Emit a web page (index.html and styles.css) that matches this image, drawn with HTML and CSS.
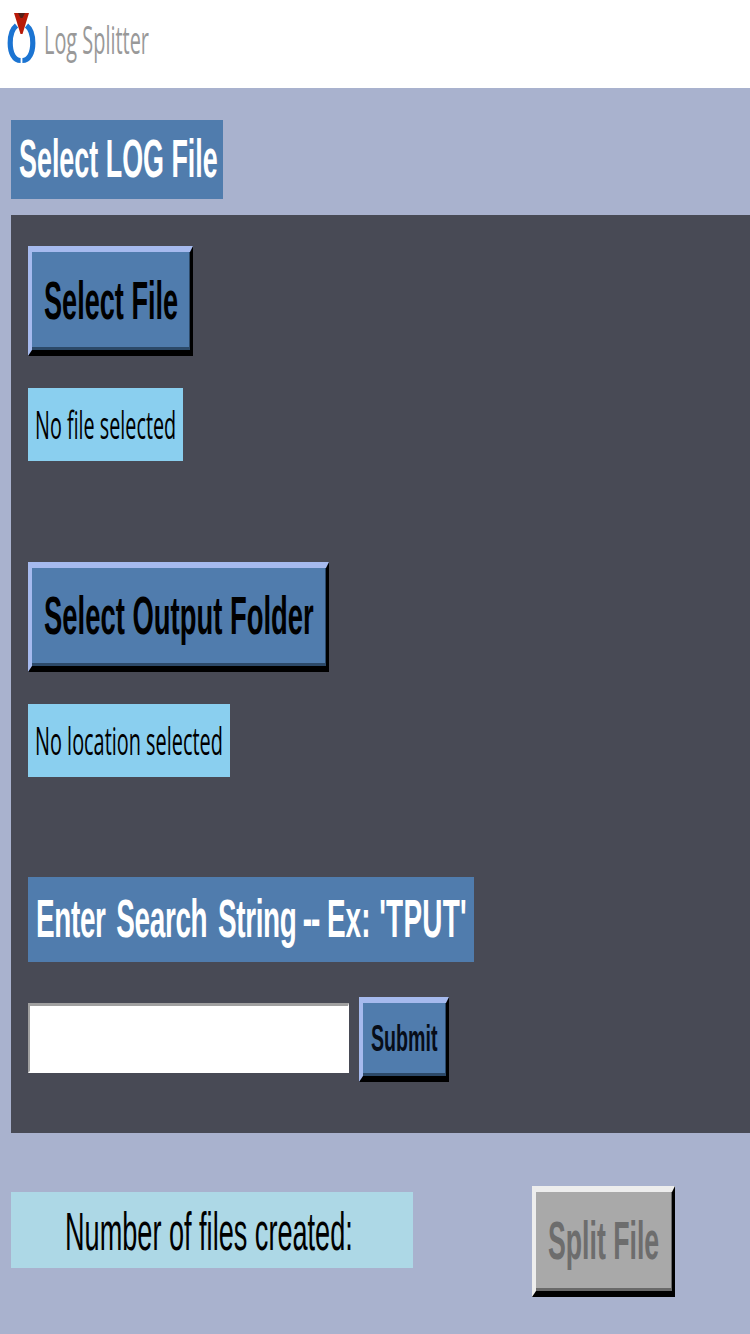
FILE: index.html
```html
<!DOCTYPE html>
<html lang="en">
<head>
<meta charset="utf-8">
<title>Log Splitter</title>
<link rel="stylesheet" href="styles.css">
</head>
<body>
<header class="titlebar">
  <svg class="logo" width="30" height="54" viewBox="0 0 30 54" aria-hidden="true">
    <path d="M9.500 13.500C5 17 3.200 23 3.200 31C3.200 41 7 48.500 13.600 48.500" fill="none" stroke="#1b74d2" stroke-width="5.200"/>
    <path d="M19.500 13.500C24 17 25.800 23 25.800 31C25.800 41 22 48.500 15.400 48.500" fill="none" stroke="#1b74d2" stroke-width="5.200"/>
    <path d="M7 1H22L15.500 22H13.500Z" fill="#b81a08"/>
    <path d="M11 1H18L15.500 6H13.500Z" fill="#542018"/>
  </svg>
  <h1 class="title"><span class="text">Log Splitter</span></h1>
</header>
<main class="content">
  <h2 class="label heading"><span class="text">Select LOG File</span></h2>
  <section class="panel">
    <button class="button select-file"><span class="text">Select File</span></button>
    <div class="status file-status"><span class="text">No file selected</span></div>
    <button class="button select-folder"><span class="text">Select Output Folder</span></button>
    <div class="status folder-status"><span class="text">No location selected</span></div>
    <label class="label search-label" for="search"><span class="text"><span class="lead">Enter Search String</span> <span class="dashes">--</span> Ex: <span class="sample">'TPUT'</span></span></label>
    <div class="search-row">
      <input class="search-input" id="search" type="text">
      <button class="button submit"><span class="text">Submit</span></button>
    </div>
  </section>
  <footer class="footer">
    <div class="count"><span class="text">Number of files created:</span></div>
    <button class="button split" disabled><span class="text">Split File</span></button>
  </footer>
</main>
</body>
</html>
```
FILE: styles.css
```css
* { box-sizing: border-box; }

body {
  margin: 0;
  width: 750px;
  height: 1334px;
  overflow: hidden;
  background: #a9b2ce;
  font-family: "Liberation Sans", Arial, sans-serif;
  font-size: 54px;
  line-height: 1;
  color: #000;
}

h1, h2 { margin: 0; font-size: inherit; }

/* Condensed lettering */
.text {
  display: block;
  width: max-content;
  white-space: nowrap;
  line-height: 1;
  transform: scaleX(.502);
  transform-origin: 0 0;
}

.titlebar {
  display: flex;
  align-items: flex-start;
  height: 88px;
  padding: 12px 0 0 7px;
  background: #fff;
}
.logo { flex: none; }
.title {
  width: 120px;
  padding: 8px 0 0 7px;
  font: 400 38.5px/1 "Open Sans", sans-serif;
  color: #999;
}
.title .text { transform: scaleX(.517); }

.content { padding: 32px 0 0 11px; }

.label { display: block; background: #507cad; color: #fff; font-weight: 700; }
.heading { width: 212px; height: 79px; padding: 11px 0 0 7.5px; }
.heading .text { transform: scaleX(.498); }

.panel {
  display: flex;
  flex-direction: column;
  align-items: flex-start;
  height: 918px;
  margin-top: 16px;
  padding: 31px 0 0 17px;
  background: #484a55;
}

.button {
  display: flex;
  align-items: flex-start;
  flex: none;
  margin: 0;
  border-style: solid;
  border-width: 6px 3px 6px 4px;
  border-color: #a6baee #000 #000 #a6baee;
  border-radius: 0;
  background: #507cad;
  box-shadow: inset -1px -3px #2c4968;
  color: #000;
  font: 700 54px/1 "Liberation Sans", Arial, sans-serif;
  text-align: left;
}
.select-file { width: 165px; height: 110px; padding: 21px 0 0 12px; }
.select-folder { width: 301px; height: 110px; margin-top: 101px; padding: 20px 0 0 12px; }
.select-folder .text { transform: scaleX(.508); }

.status {
  background: #8acfef;
  font: 400 39px/1 "Open Sans", sans-serif;
}
.file-status { width: 155px; height: 73px; margin-top: 32px; padding: 16px 0 0 7px; }
.file-status .text { transform: scaleX(.507); }
.folder-status { width: 202px; height: 73px; margin-top: 32px; padding: 16px 0 0 7px; }
.folder-status .text { transform: scaleX(.51); }

.search-label { width: 446px; height: 85px; margin-top: 100px; padding: 14px 0 0 7.5px; }
.search-label .text { transform: scaleX(.517); }
.lead { letter-spacing: -.7px; word-spacing: 6.5px; }
.dashes { margin-left: -3px; letter-spacing: -2px; }
.sample { margin-left: 2px; letter-spacing: .5px; }

.search-row { display: flex; align-items: flex-start; gap: 10px; margin-top: 35px; }
.search-input {
  width: 321px;
  height: 70px;
  margin: 6px 0 0;
  padding: 0 6px;
  border-style: solid;
  border-width: 3px 1px 2px 2px;
  border-color: #a0a0a0 #fff #fff #a0a0a0;
  border-radius: 0;
  background: #fff;
  font: 400 37px/1 "Liberation Sans", Arial, sans-serif;
}
.submit { width: 90px; height: 85px; padding: 17px 0 0 8px; font-size: 37px; color: #070d18; }
.submit .text { transform: scaleX(.53); }

.footer { display: flex; align-items: flex-start; padding-top: 53px; }
.count { width: 402px; height: 76px; margin-top: 6px; padding: 12px 0 0 53.5px; background: #add8e6; }
.split {
  width: 143px;
  height: 111px;
  margin-left: 119px;
  padding: 21px 0 0 12px;
  border-color: #ededed #000 #000 #ededed;
  background: #a9a9a9;
  box-shadow: inset -1px -3px #696969;
  color: #6d6d6d;
}
.split .text { transform: scaleX(.494); }
```
